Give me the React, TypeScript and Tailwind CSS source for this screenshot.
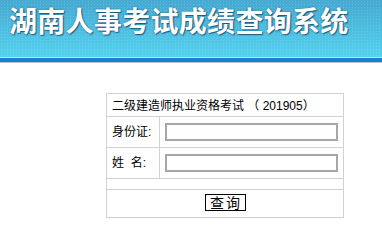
export default function App() {
  return (
    <div className="w-[382px] h-[228px] bg-white overflow-hidden font-['Liberation_Sans','Noto_Sans_CJK_SC',sans-serif] text-[12px] text-black">
      {/* header banner */}
      <div className="h-[57px] bg-[radial-gradient(rgba(255,255,255,0.14)_0.8px,transparent_1px),linear-gradient(to_bottom,#46a9d1,#55d2ef)] bg-size-[3px_3px,100%_100%] pl-[9px] pt-[2px]">
        <h1 className="text-[28px] leading-[36px] font-semibold text-white tracking-[0.3px] font-['Noto_Sans_CJK_SC',sans-serif] [text-shadow:1px_1px_1px_rgba(20,70,110,0.8),0_0_2px_rgba(20,70,110,0.6)]">
          湖南人事考试成绩查询系统
        </h1>
      </div>
      <div className="h-px bg-[#a9e6f6]" />
      <div className="h-[4px] bg-[#1b7fd3]" />
      <div className="h-px bg-[#b9c4cc]" />

      {/* query form */}
      <table className="ml-[106px] mt-[30px] w-[238px] border-collapse border border-[#d0d0d0]">
        <tbody>
          <tr className="h-[23px]">
            <td colSpan={2} className="border border-[#d0d0d0] pl-[5px] pt-px">
              二级建造师执业资格考试 （ 201905）
            </td>
          </tr>
          <tr className="h-[31px]">
            <td className="w-[53px] border border-[#d0d0d0] pl-[5px]">身份证:</td>
            <td className="border border-[#d0d0d0] pl-[5px]">
              <input className="block w-[173px] h-[18px] border-2 border-[#a7a7a7] bg-white outline-none" />
            </td>
          </tr>
          <tr className="h-[31px]">
            <td className="border border-[#d0d0d0] pl-[5px] whitespace-pre">姓  名:</td>
            <td className="border border-[#d0d0d0] pl-[5px]">
              <input className="block w-[173px] h-[18px] border-2 border-[#a7a7a7] bg-white outline-none" />
            </td>
          </tr>
          <tr className="h-[11px]">
            <td colSpan={2} className="border border-[#d0d0d0]" />
          </tr>
          <tr className="h-[28px]">
            <td colSpan={2} className="border border-[#d0d0d0] text-center">
              <button className="inline-flex items-center justify-center w-[41px] h-[17px] border border-black bg-white text-[14px] leading-none tracking-[2px] pl-[2px] font-['Noto_Sans_CJK_SC',sans-serif]">
                查询
              </button>
            </td>
          </tr>
        </tbody>
      </table>
    </div>
  )
}
